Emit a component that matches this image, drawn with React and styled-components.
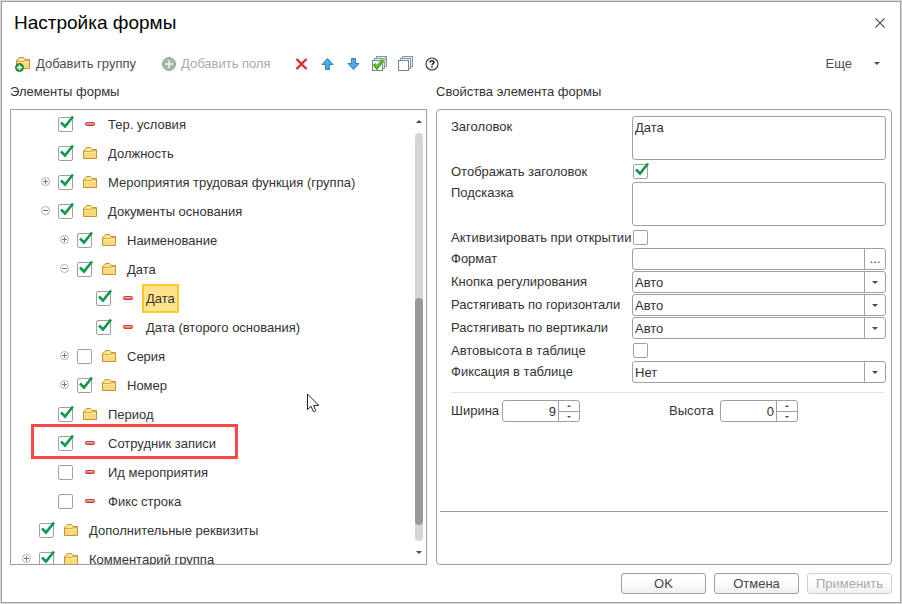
import React, { useState } from 'react'
import styled, { createGlobalStyle } from 'styled-components'


const tree = [
    { id: 1, level: 2, title: 'Тер. условия', checked: true },
    { id: 2, level: 2, title: 'Должность', checked: true, folder: true },
    { id: 3, level: 2, title: 'Мероприятия трудовая функция (группа)', checked: true, folder: true, toggle: 'plus' },
    { id: 4, level: 2, title: 'Документы основания', checked: true, folder: true, toggle: 'minus' },
    { id: 5, level: 3, title: 'Наименование', checked: true, folder: true, toggle: 'plus' },
    { id: 6, level: 3, title: 'Дата', checked: true, folder: true, toggle: 'minus' },
    { id: 7, level: 4, title: 'Дата', checked: true },
    { id: 8, level: 4, title: 'Дата (второго основания)', checked: true },
    { id: 9, level: 3, title: 'Серия', folder: true, toggle: 'plus' },
    { id: 10, level: 3, title: 'Номер', checked: true, folder: true, toggle: 'plus' },
    { id: 11, level: 2, title: 'Период', checked: true, folder: true },
    { id: 12, level: 2, title: 'Сотрудник записи', checked: true, marked: true },
    { id: 13, level: 2, title: 'Ид мероприятия' },
    { id: 14, level: 2, title: 'Фикс строка' },
    { id: 15, level: 1, title: 'Дополнительные реквизиты', checked: true, folder: true },
    { id: 16, level: 1, title: 'Комментарий группа', checked: true, folder: true, toggle: 'plus' },
]

const FolderShape = () => (
    <>
        <path d="M.5 11.5V3.5L2 2.5L3.5 .5H7.5L9 2.5H13.5V11.5Z" fill="#f9d978" stroke="#c8913f" />
        <path d="M2 3.6L4 1.2H7.2L9 3.6Z" fill="#fdf07c" />
        <path d="M1 4.5H8L9.5 3.5H13" fill="none" stroke="#dba850" />
        <path d="M1.5 5.5H12.5" stroke="#fde9a4" />
    </>
)

const FolderIcon = () => (
    <svg width="14" height="12" viewBox="0 0 14 12"><FolderShape /></svg>
)

const FieldIcon = () => (
    <svg width="14" height="12" viewBox="0 0 14 12">
        <rect x="2.5" y="4.5" width="9" height="3" rx="1" fill="#f0736a" stroke="#c9403a" />
        <path d="M4 5.5H10" stroke="#f9aca3" />
    </svg>
)

const ToggleIcon = ({ type }) => (
    <svg width="9" height="9" viewBox="0 0 9 9">
        <circle cx="4.5" cy="4.5" r="4" fill="#fff" stroke="#b0b0b0" />
        <path d="M2 4.5H7" stroke="#777" />
        {type === 'plus' && <path d="M4.5 2V7" stroke="#777" />}
    </svg>
)

const AddGroupIcon = () => (
    <svg width="16" height="16" viewBox="0 0 16 16">
        <g transform="translate(1 1)"><FolderShape /></g>
        <circle cx="4.5" cy="11.5" r="4" fill="#2da044" stroke="#1d7d33" />
        <path d="M4.5 9V14M2 11.5H7" stroke="#fff" strokeWidth="1.4" />
    </svg>
)

const AddFieldIcon = () => (
    <svg width="14" height="14" viewBox="0 0 14 14">
        <circle cx="7" cy="7" r="6.5" fill="#a3b8a7" stroke="#94a898" />
        <path d="M7 3V11M3 7H11" stroke="#dfe8e1" strokeWidth="2" />
    </svg>
)

const DeleteIcon = () => (
    <svg width="14" height="14" viewBox="0 0 14 14">
        <path d="M1.5 2L11.5 12M11.5 2L1.5 12" stroke="#dd2a2e" strokeWidth="2.4" />
    </svg>
)

const ArrowIcon = ({ down }) => (
    <svg width="14" height="14" viewBox="0 0 14 14">
        <path
            d={down ? 'M4.5 1.5H8.5V6.5H12L6.5 12.5L1 6.5H4.5Z' : 'M4.5 12.5H8.5V7.5H12L6.5 1.5L1 7.5H4.5Z'}
            fill="#42aeea"
            stroke="#3f7da6"
        />
    </svg>
)

const StackIcon = ({ checked }) => (
    <svg width="16" height="16" viewBox="0 0 16 16">
        <rect x="4.5" y=".5" width="10" height="10" fill="#e6eef2" stroke="#8397a3" />
        <rect x="2.5" y="2.5" width="10" height="10" fill="#eef3f6" stroke="#8397a3" />
        <rect x=".5" y="4.5" width="10" height="10" fill="#fff" stroke="#6e8493" />
        {checked && <path d="M9 4L14 .8V4L10 9Z" fill="#a9cfa0" />}
        {checked && <path d="M2 8L4.8 11.6L11 4.2" fill="none" stroke="#3f9c1d" strokeWidth="3.2" />}
        {checked && <path d="M2.6 8.5L4.9 11L10.6 4.6" fill="none" stroke="#67cc2d" strokeWidth="1.2" />}
    </svg>
)

const HelpIcon = () => (
    <svg width="14" height="14" viewBox="0 0 14 14">
        <circle cx="7" cy="7" r="6" fill="#fff" stroke="#333" strokeWidth="1.1" />
        <path d="M5 5.6C5 3 9 3.1 9 5.3C9 6.6 7 6.5 7 8.2" fill="none" stroke="#222" strokeWidth="1.5" />
        <path d="M6.2 9.2H7.8V10.7H6.2Z" fill="#222" />
    </svg>
)

const CloseIcon = () => (
    <svg width="10" height="10" viewBox="0 0 10 10">
        <path d="M.4 .4L9.6 9.6M9.6 .4L.4 9.6" stroke="#444" strokeWidth="1.1" />
    </svg>
)

const Caret = ({ up, size = 6 }) => (
    <svg width={size} height={size / 2} viewBox="0 0 6 3">
        <path d={up ? 'M0 3L3 0L6 3Z' : 'M0 0H6L3 3Z'} fill="#4a4a4a" />
    </svg>
)

const PointerIcon = () => (
    <svg width="13" height="20" viewBox="0 0 13 20">
        <path
            d="M.5 1V16.5L4 13.2L6.3 18.4Q7.8 19.3 8.7 17.8L6.6 12.4H11.8Z"
            fill="#fff"
            stroke="#222230"
        />
    </svg>
)

const Tick = (props) => (
    <TickBlock>
        <input type="checkbox" {...props} />
        <svg width="15" height="15" viewBox="0 0 15 15">
            <path d="M3 5.5L7 9.5L15 -.5" fill="none" stroke="#0a9a4b" strokeWidth="2.6" />
        </svg>
    </TickBlock>
)

const Combo = ({ id, options }) => (
    <FieldBox>
        <select id={id}>
            {options.map((option) => <option key={option}>{option}</option>)}
        </select>
        <FieldSide><Caret /></FieldSide>
    </FieldBox>
)

const NumberField = ({ id, label, value }) => {
    const [number, setNumber] = useState(value)

    return (
        <NumberGroup>
            <label htmlFor={id}>{label}</label>
            <Spinner>
                <input
                    id={id}
                    type="text"
                    inputMode="numeric"
                    value={number}
                    onChange={(e) => setNumber(Number(e.target.value) || 0)}
                />
                <div className="spinner-buttons">
                    <button type="button" aria-label="Увеличить" onClick={() => setNumber(number + 1)}><Caret up size={4} /></button>
                    <button type="button" aria-label="Уменьшить" onClick={() => setNumber(Math.max(0, number - 1))}><Caret size={4} /></button>
                </div>
            </Spinner>
        </NumberGroup>
    )
}

const TreeItem = ({ item, selected, onSelect }) => (
    <TreeRow $level={item.level}>
        <span className="tree-toggle">
            {item.toggle && (
                <IconButton type="button" aria-label="Развернуть или свернуть"><ToggleIcon type={item.toggle} /></IconButton>
            )}
        </span>
        <Tick defaultChecked={item.checked} aria-label={item.title} />
        <span className="tree-icon">{item.folder ? <FolderIcon /> : <FieldIcon />}</span>
        <TreeTitle type="button" $selected={selected} onClick={onSelect}>{item.title}</TreeTitle>
        {item.marked && <Mark />}
    </TreeRow>
)

export default function App() {
    const [selectedId, setSelectedId] = useState(7)

    return (
        <>
            <GlobalStyle />
            <Dialog>
                <Header>
                    <h1>Настройка формы</h1>
                    <IconButton type="button" aria-label="Закрыть"><CloseIcon /></IconButton>
                </Header>

                <Toolbar>
                    <ToolButton type="button"><AddGroupIcon />Добавить группу</ToolButton>
                    <ToolButton type="button" disabled><AddFieldIcon />Добавить поля</ToolButton>
                    <div className="toolbar-icons">
                        <IconButton type="button" aria-label="Удалить"><DeleteIcon /></IconButton>
                        <IconButton type="button" aria-label="Переместить вверх"><ArrowIcon /></IconButton>
                        <IconButton type="button" aria-label="Переместить вниз"><ArrowIcon down /></IconButton>
                        <IconButton type="button" aria-label="Установить флажки"><StackIcon checked /></IconButton>
                        <IconButton type="button" aria-label="Снять флажки"><StackIcon /></IconButton>
                        <IconButton type="button" aria-label="Справка"><HelpIcon /></IconButton>
                    </div>
                    <MoreButton type="button">Еще<Caret /></MoreButton>
                </Toolbar>

                <Panels>
                    <h2>Элементы формы</h2>
                    <h2>Свойства элемента формы</h2>

                    <TreePanel>
                        <TreeList>
                            {tree.map((item) => (
                                <TreeItem
                                    key={item.id}
                                    item={item}
                                    selected={item.id === selectedId}
                                    onSelect={() => setSelectedId(item.id)}
                                />
                            ))}
                        </TreeList>
                        <ScrollBar>
                            <Caret up />
                            <div className="scroll-track">
                                <div className="scroll-thumb" />
                            </div>
                            <Caret />
                        </ScrollBar>
                        <Pointer><PointerIcon /></Pointer>
                    </TreePanel>

                    <PropsPanel>
                        <PropsForm>
                            <label htmlFor="title">Заголовок</label>
                            <TextArea id="title" defaultValue="Дата" />

                            <label htmlFor="show-title">Отображать заголовок</label>
                            <TickCell><Tick id="show-title" defaultChecked /></TickCell>

                            <label htmlFor="hint">Подсказка</label>
                            <TextArea id="hint" />

                            <label htmlFor="activate">Активизировать при открытии</label>
                            <TickCell><Tick id="activate" /></TickCell>

                            <label htmlFor="format">Формат</label>
                            <FieldBox>
                                <input id="format" type="text" />
                                <FieldSide as="button" type="button" aria-label="Выбрать формат">...</FieldSide>
                            </FieldBox>

                            <label htmlFor="control">Кнопка регулирования</label>
                            <Combo id="control" options={['Авто', 'Да', 'Нет']} />

                            <label htmlFor="stretch-x">Растягивать по горизонтали</label>
                            <Combo id="stretch-x" options={['Авто', 'Да', 'Нет']} />

                            <label htmlFor="stretch-y">Растягивать по вертикали</label>
                            <Combo id="stretch-y" options={['Авто', 'Да', 'Нет']} />

                            <label htmlFor="auto-height">Автовысота в таблице</label>
                            <TickCell><Tick id="auto-height" /></TickCell>

                            <label htmlFor="fixing">Фиксация в таблице</label>
                            <Combo id="fixing" options={['Нет', 'Лево', 'Право']} />
                        </PropsForm>
                        <SizeRow>
                            <NumberField id="width" label="Ширина" value={9} />
                            <NumberField id="height" label="Высота" value={0} />
                        </SizeRow>
                        <PropsFooter />
                    </PropsPanel>
                </Panels>

                <Footer>
                    <Button type="button">OK</Button>
                    <Button type="button">Отмена</Button>
                    <Button type="button" disabled>Применить</Button>
                </Footer>
            </Dialog>
        </>
    )
}

const GlobalStyle = createGlobalStyle`
    * {
        box-sizing: border-box;
        margin: 0;
        padding: 0;
    }
    body {
        background-color: #d6d6d6;
        color: #333;
    }
    body, button, input, textarea, select {
        font-family: "Liberation Sans", Arial, sans-serif;
        font-size: 13px;
        line-height: 16px;
    }
    button, input, textarea, select {
        color: inherit;
        outline: none;
    }
    svg {
        display: block;
        flex-shrink: 0;
    }
`

const Dialog = styled.div`
    display: flex;
    flex-direction: column;
    height: calc(100vh - 2px);
    margin: 1px;
    padding: 0 8px 8px;
    border: 1px solid #a0a0a0;
    background-color: #fff;
`

const Header = styled.header`
    display: flex;
    align-items: center;
    justify-content: space-between;
    height: 42px;
    padding: 0 7px 0 4px;
    h1 {
        color: #000;
        font-size: 19px;
        font-weight: 400;
        line-height: 22px;
    }
`

const IconButton = styled.button`
    display: flex;
    align-items: center;
    justify-content: center;
    border: none;
    background: none;
`

const Toolbar = styled.div`
    display: flex;
    align-items: center;
    height: 39px;
    padding: 0 12px 0 5px;
    color: #4c4c4c;
    .toolbar-icons {
        display: grid;
        grid-template-columns: repeat(6, 26px);
    }
`

const ToolButton = styled(IconButton)`
    gap: 5px;
    margin-right: 26px;
    white-space: nowrap;
    &:disabled {
        margin-right: 18px;
        color: #a9a9a9;
    }
`

const MoreButton = styled(IconButton)`
    gap: 22px;
    margin-left: auto;
`

const Panels = styled.main`
    display: grid;
    grid-template-columns: 417fr 456fr;
    grid-template-rows: 16px 1fr;
    gap: 10px 9px;
    flex: 1;
    min-height: 0;
    h2 {
        font-size: 13px;
        font-weight: 400;
        line-height: 18px;
        min-width: 0;
    }
`

const TreePanel = styled.section`
    position: relative;
    display: flex;
    min-width: 0;
    min-height: 0;
    border: 1px solid #a0a0a0;
    overflow: hidden;
`

const TreeList = styled.div`
    flex: 1;
    min-width: 0;
`

const TreeRow = styled.div`
    position: relative;
    display: flex;
    align-items: center;
    height: 29px;
    padding-left: ${({ $level }) => $level * 19 - 8}px;
    .tree-toggle {
        width: 17px;
        padding-bottom: 2px;
    }
    .tree-icon {
        padding: 0 7px 2px 10px;
    }
`

const TreeTitle = styled.button`
    height: 29px;
    padding: 0 2px;
    border: 2px solid ${({ $selected }) => ($selected ? '#fcc82c' : 'transparent')};
    background-color: ${({ $selected }) => ($selected ? '#ffe48c' : 'transparent')};
    white-space: nowrap;
`

const Mark = styled.div`
    position: absolute;
    top: -5px;
    bottom: -1px;
    left: 20px;
    width: 207px;
    border: 3px solid #fb4747;
    pointer-events: none;
`

const Pointer = styled.div`
    position: absolute;
    top: 283px;
    left: 296px;
    pointer-events: none;
`

const ScrollBar = styled.div`
    display: flex;
    flex-direction: column;
    align-items: center;
    gap: 10px;
    width: 8px;
    margin: 10px 3px 10px 0;
    .scroll-track {
        display: flex;
        flex-direction: column;
        justify-content: flex-end;
        flex: 1;
        width: 8px;
        padding-bottom: 16px;
        border-radius: 4px;
        background-color: #d5d5d5;
    }
    .scroll-thumb {
        height: 58%;
        border-radius: 4px;
        background-color: #999;
    }
`

const TickBlock = styled.span`
    display: grid;
    width: 15px;
    height: 15px;
    input, svg {
        grid-area: 1 / 1;
    }
    input {
        appearance: none;
        width: 15px;
        height: 15px;
        border: 1px solid #a0a0a0;
        border-radius: 2px;
        background-color: #fff;
    }
    svg {
        visibility: hidden;
        overflow: visible;
        pointer-events: none;
    }
    input:checked + svg {
        visibility: visible;
    }
`

const PropsPanel = styled.section`
    display: flex;
    flex-direction: column;
    min-width: 0;
    min-height: 0;
    border: 1px solid #a0a0a0;
    border-radius: 4px;
`

const PropsForm = styled.form`
    display: grid;
    grid-template-columns: 181px 1fr;
    row-gap: 1px;
    padding: 6px 5px 9px 14px;
    label {
        padding-top: 3px;
        white-space: nowrap;
    }
`

const TextArea = styled.textarea`
    width: 100%;
    height: 44px;
    padding: 3px 2px;
    border: 1px solid #a0a0a0;
    border-radius: 3px;
    resize: none;
`

const TickCell = styled.div`
    height: 20px;
    padding: 3px 1px 0;
`

const FieldBox = styled.div`
    display: grid;
    grid-template-columns: 1fr 21px;
    height: 22px;
    border: 1px solid #a0a0a0;
    border-radius: 3px;
    input, select {
        grid-row: 1;
        grid-column: 1;
        min-width: 0;
        padding: 1px 2px 0;
        border: none;
        background: none;
    }
    select {
        grid-column: 1 / 3;
        appearance: none;
    }
`

const FieldSide = styled.span`
    grid-row: 1;
    grid-column: 2;
    display: flex;
    align-items: center;
    justify-content: center;
    border: none;
    border-left: 1px solid #a0a0a0;
    background: none;
    pointer-events: none;
    button& {
        pointer-events: auto;
    }
`

const SizeRow = styled.div`
    display: grid;
    grid-template-columns: repeat(2, 218px);
    margin: 0 7px 0 14px;
    padding-top: 7px;
    border-top: 1px solid #e2e2e2;
`

const NumberGroup = styled.div`
    display: grid;
    grid-template-columns: 51px 78px;
    label {
        padding-top: 3px;
    }
`

const Spinner = styled.div`
    display: grid;
    grid-template-columns: 1fr 21px;
    height: 22px;
    border: 1px solid #a0a0a0;
    border-radius: 3px;
    input {
        min-width: 0;
        padding: 1px 2px 0;
        border: none;
        background: none;
        text-align: right;
    }
    .spinner-buttons {
        display: grid;
        grid-template-rows: 1fr 1fr;
        border-left: 1px solid #a0a0a0;
    }
    button {
        display: flex;
        align-items: center;
        justify-content: center;
        border: none;
        background: none;
    }
    button + button {
        border-top: 1px solid #a0a0a0;
    }
`

const PropsFooter = styled.div`
    height: 53px;
    margin: auto 3px 0;
    border-top: 1px solid #a0a0a0;
`

const Footer = styled.footer`
    display: flex;
    justify-content: flex-end;
    gap: 8px;
    padding-top: 8px;
`

const Button = styled.button`
    width: 85px;
    height: 21px;
    border: 1px solid #a0a0a0;
    border-radius: 3px;
    background: linear-gradient(#fff 40%, #efefef);
    color: #444;
    &:disabled {
        border-color: #d0d0d0;
        color: #a9a9a9;
    }
`
